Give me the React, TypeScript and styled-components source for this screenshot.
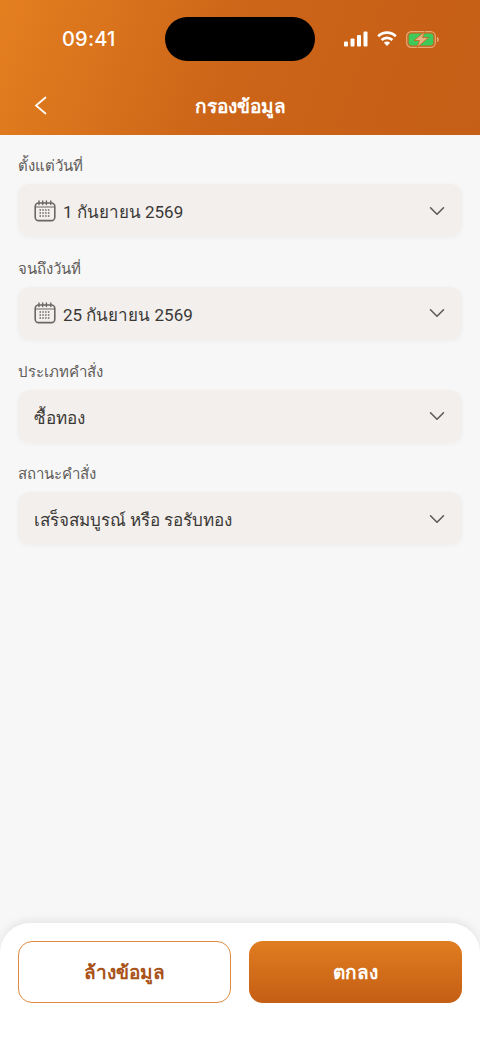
import { createGlobalStyle, styled } from "styled-components";
import { ChevronDown } from "lucide-react";

const GlobalStyle = createGlobalStyle`
  html, body {
    margin: 0;
    padding: 0;
    background: #f7f7f7;
  }

  * {
    box-sizing: border-box;
  }
`;

const StyledPage = styled.div`
  display: flex;
  flex-direction: column;
  width: 480px;
  height: 1044px;
  overflow: hidden;
  background: #f7f7f7;
  font-family: Inter, "Noto Sans", sans-serif;
`;

const StyledHeader = styled.header`
  flex: none;
  height: 135px;
  padding: 0 18px;
  background: linear-gradient(110deg, #e47f20 0%, #cc6518 48%, #c55e16 100%);
  color: #fff;
`;

const StyledStatusBar = styled.div`
  display: grid;
  grid-template-columns: 1fr 150px 1fr;
  align-items: center;
  height: 44px;
  margin-top: 17px;
`;

const StyledTime = styled.span`
  padding-left: 44px;
  font-size: 20px;
  font-weight: 500;
  letter-spacing: 0.2px;
`;

const StyledIsland = styled.div`
  height: 44px;
  border-radius: 22px;
  background: #000;
`;

const StyledStatusIcons = styled.div`
  display: flex;
  align-items: center;
  gap: 9px;
  padding-left: 29px;
`;

const StyledNavBar = styled.div`
  position: relative;
  display: flex;
  align-items: center;
  justify-content: center;
  height: 46px;
  margin-top: 22px;
`;

const StyledBack = styled.button`
  position: absolute;
  left: 16px;
  top: 13px;
  display: flex;
  padding: 0;
  border: none;
  background: none;
`;

const StyledTitle = styled.h1`
  margin: 0;
  font-size: 19px;
  font-weight: 600;
`;

const StyledForm = styled.main`
  flex: 1;
  display: flex;
  flex-direction: column;
  gap: 18.8px;
  padding: 18px 18px 0;
`;

const StyledField = styled.div`
  display: flex;
  flex-direction: column;
  gap: 5px;
`;

const StyledLabel = styled.label`
  height: 26px;
  font-size: 15px;
  line-height: 26px;
  color: #5f5c59;
`;

const StyledSelect = styled.div`
  display: flex;
  align-items: center;
  gap: 7px;
  height: 53px;
  padding: 0 12px 0 16px;
  border-radius: 12px;
  background: #f2efec;
  box-shadow: 0 1px 4px rgba(120, 110, 100, 0.06);
`;

const StyledValue = styled.span`
  flex: 1;
  padding-top: 2px;
  font-family: Roboto, Inter, sans-serif;
  font-size: 17px;
  color: #3a3836;
`;

const StyledChevron = styled(ChevronDown)`
  flex: none;
  color: #5f5c59;
`;

const StyledFooter = styled.footer`
  flex: none;
  display: grid;
  grid-template-columns: 1fr 1fr;
  gap: 18px;
  height: 121px;
  padding: 18px 18px 0;
  border-radius: 30px 30px 0 0;
  background: #fff;
  box-shadow: 0 -3px 8px rgba(0, 0, 0, 0.07);
`;

const StyledButton = styled.button<{ $primary?: boolean }>`
  height: 62px;
  border: ${({ $primary }) => ($primary ? "none" : "1.5px solid #df8a3e")};
  border-radius: 14px;
  background: ${({ $primary }) =>
    $primary ? "linear-gradient(180deg, #e07d20 0%, #c45e15 100%)" : "#fff"};
  color: ${({ $primary }) => ($primary ? "#fff" : "#a9521a")};
  font-family: inherit;
  font-size: 19px;
  font-weight: 600;
`;

const BackIcon = (): JSX.Element => (
  <svg width='13' height='19' viewBox='0 0 13 19' fill='none' stroke='#fff'>
    <path d='M11.500 1.500 2 9.500l9.500 8' strokeWidth='1.700' strokeLinecap='round' />
  </svg>
);

const CalendarIcon = (): JSX.Element => (
  <svg width='22' height='22' viewBox='0 0 22 22' fill='none' stroke='#6a6764'>
    <rect x='1.2' y='3' width='19.6' height='17.6' rx='3.4' strokeWidth='1.6' />
    <path d='M1.5 7h19' strokeWidth='1' />
    <path
      d='M5 1v3.5M8.7 1v3.5M12.4 1v3.5M16.8 1v3.5'
      strokeWidth='1.4'
      strokeLinecap='round'
    />
    <path
      d='M5.5 10h11M5.5 13h11M5.5 16h11'
      strokeWidth='1.4'
      strokeDasharray='1.5 1.3'
    />
  </svg>
);

const SignalIcon = (): JSX.Element => (
  <svg width='24' height='16' viewBox='0 0 24 16' fill='#fff'>
    <rect x='0' y='10.5' width='4' height='5' rx='1' />
    <rect x='6.5' y='7.5' width='4' height='8' rx='1' />
    <rect x='13' y='4' width='4' height='11.5' rx='1' />
    <rect x='19.5' y='0.5' width='4' height='15' rx='1' />
  </svg>
);

const WifiIcon = (): JSX.Element => (
  <svg width='20' height='16' viewBox='0 0 20 16' fill='none' stroke='#fff'>
    <path d='M1.2 5.2a12.6 12.6 0 0 1 17.6 0' strokeWidth='2.600' />
    <path d='M4.6 9a7.8 7.8 0 0 1 10.8 0' strokeWidth='2.600' />
    <path d='M10 15 6.900 11.800a4.400 4.400 0 0 1 6.200 0Z' fill='#fff' stroke='none' />
  </svg>
);

const BatteryIcon = (): JSX.Element => (
  <svg width='33' height='17' viewBox='0 0 33 17' fill='none'>
    <rect
      x='0.7'
      y='0.7'
      width='28.6'
      height='15.6'
      rx='4.6'
      stroke='#e7a877'
      strokeWidth='1.2'
    />
    <rect x='2.6' y='2.6' width='24.8' height='11.8' rx='2.8' fill='#3ec95a' />
    <path d='M31 6v5c1.2-.3 1.8-1.3 1.8-2.5S32.200 6.300 31 6Z' fill='#e7a877' />
    <path
      d='M19 0.500 8 9.500h5.500l-2.500 7 11.500-10h-6z'
      fill='#e9b184'
      stroke='#c96318'
      strokeWidth='0.8'
    />
  </svg>
);

const fields = [
  { label: "ตั้งแต่วันที่", value: "1 กันยายน 2569", hasCalendar: true },
  { label: "จนถึงวันที่", value: "25 กันยายน 2569", hasCalendar: true },
  { label: "ประเภทคำสั่ง", value: "ซื้อทอง", hasCalendar: false },
  { label: "สถานะคำสั่ง", value: "เสร็จสมบูรณ์ หรือ รอรับทอง", hasCalendar: false },
];

const App = (): JSX.Element => {
  return (
    <StyledPage>
      <GlobalStyle />
      <StyledHeader>
        <StyledStatusBar>
          <StyledTime>09:41</StyledTime>
          <StyledIsland />
          <StyledStatusIcons>
            <SignalIcon />
            <WifiIcon />
            <BatteryIcon />
          </StyledStatusIcons>
        </StyledStatusBar>
        <StyledNavBar>
          <StyledBack>
            <BackIcon />
          </StyledBack>
          <StyledTitle>กรองข้อมูล</StyledTitle>
        </StyledNavBar>
      </StyledHeader>
      <StyledForm>
        {fields.map((field) => (
          <StyledField key={field.label}>
            <StyledLabel>{field.label}</StyledLabel>
            <StyledSelect>
              {field.hasCalendar && <CalendarIcon />}
              <StyledValue>{field.value}</StyledValue>
              <StyledChevron size={26} strokeWidth={1.5} />
            </StyledSelect>
          </StyledField>
        ))}
      </StyledForm>
      <StyledFooter>
        <StyledButton>ล้างข้อมูล</StyledButton>
        <StyledButton $primary>ตกลง</StyledButton>
      </StyledFooter>
    </StyledPage>
  );
};

export default App;
